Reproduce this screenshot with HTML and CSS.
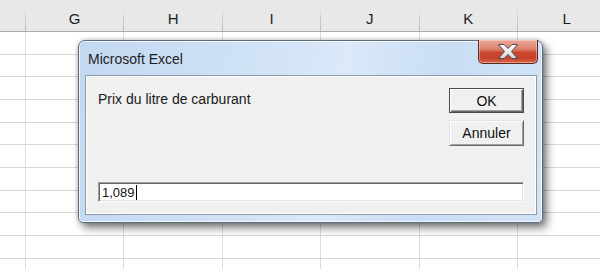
FILE: index.html
```html
<!DOCTYPE html>
<html lang="fr">
<head>
  <meta charset="UTF-8">
  <title>Microsoft Excel - InputBox</title>
  <link rel="stylesheet" href="styles.css">
</head>
<body>

  <div class="sheet">
    <div class="col-head">
      <div class="hcell"></div>
      <div class="hcell">G</div>
      <div class="hcell">H</div>
      <div class="hcell">I</div>
      <div class="hcell">J</div>
      <div class="hcell">K</div>
      <div class="hcell">L</div>
    </div>
    <div class="row"><div></div><div></div><div></div><div></div><div></div><div></div><div></div></div>
    <div class="row"><div></div><div></div><div></div><div></div><div></div><div></div><div></div></div>
    <div class="row"><div></div><div></div><div></div><div></div><div></div><div></div><div></div></div>
    <div class="row"><div></div><div></div><div></div><div></div><div></div><div></div><div></div></div>
    <div class="row"><div></div><div></div><div></div><div></div><div></div><div></div><div></div></div>
    <div class="row"><div></div><div></div><div></div><div></div><div></div><div></div><div></div></div>
    <div class="row"><div></div><div></div><div></div><div></div><div></div><div></div><div></div></div>
    <div class="row"><div></div><div></div><div></div><div></div><div></div><div></div><div></div></div>
    <div class="row"><div></div><div></div><div></div><div></div><div></div><div></div><div></div></div>
    <div class="row"><div></div><div></div><div></div><div></div><div></div><div></div><div></div></div>
    <div class="row"><div></div><div></div><div></div><div></div><div></div><div></div><div></div></div>
  </div>

  <div class="dialog">
    <div class="titlebar">
      <span class="title">Microsoft Excel</span>
      <button class="close" title="Fermer">
        <svg width="22" height="17" viewBox="0 0 22 17">
          <defs>
            <linearGradient id="xfill" x1="0" y1="0" x2="0" y2="1">
              <stop offset="0" stop-color="#ffffff"/>
              <stop offset="1" stop-color="#d8d8d8"/>
            </linearGradient>
          </defs>
          <polygon points="1.5,1.5 7,1.5 11,5.5 15,1.5 20.5,1.5 14.5,8.5 20.5,15.5 15,15.5 11,11.5 7,15.5 1.5,15.5 7.5,8.5"
                   fill="url(#xfill)" stroke="#4a4a4a" stroke-width="1" stroke-linejoin="round"/>
        </svg>
      </button>
    </div>
    <div class="client">
      <div class="top">
        <p class="prompt">Prix du litre de carburant</p>
        <div class="actions">
          <button class="btn default">OK</button>
          <button class="btn">Annuler</button>
        </div>
      </div>
      <div class="field">1,089<span class="caret"></span></div>
    </div>
  </div>

</body>
</html>
```

FILE: styles.css
```css
body {
  margin: 0;
  width: 600px;
  height: 269px;
  overflow: hidden;
  background: #fff;
  font-family: "Liberation Sans", Arial, sans-serif;
  position: relative;
}

/* feuille excel en fond */
.col-head,
.row {
  display: grid;
  grid-template-columns: 26px repeat(6, 98.4px);
}

.col-head {
  height: 31px;
  background: #e8e8e8;
  border-bottom: 1px solid #ababab;
}

.hcell {
  display: flex;
  align-items: center;
  justify-content: center;
  padding-top: 6px;
  font-size: 15px;
  color: #1f1f1f;
  border-right: 1px solid transparent;
  border-image: linear-gradient(to bottom, #e8e8e8 0, #e8e8e8 8px, #c8c8c8 20px, #b8b8b8 100%) 1;
}

.row {
  height: 21.67px;
  border-bottom: 1px solid #d6d6d6;
}

.row div {
  border-right: 1px solid #dcdcdc;
}

/* boite de dialogue */
.dialog {
  position: absolute;
  left: 78px;
  top: 40px;
  width: 463px;
  height: 181px;
  border: 1px solid #5d6b7a;
  border-radius: 7px 7px 5px 5px;
  background: linear-gradient(100deg, #c3d9f1 0%, #cde0f5 30%, #dbe9f9 55%, #c9ddf4 75%, #d2e4f7 100%);
  box-shadow: 4px 5px 9px rgba(0, 0, 0, 0.5), 0 0 4px rgba(0, 0, 0, 0.25), inset 0 0 0 1px rgba(255, 255, 255, 0.7);
  display: flex;
  flex-direction: column;
}

.titlebar {
  height: 34px;
  position: relative;
  display: flex;
  align-items: center;
  padding-left: 9px;
}

.title {
  font-size: 14px;
  color: #1e1e1e;
  margin-top: 1px;
}

.close {
  position: absolute;
  right: 4px;
  top: -1px;
  width: 60px;
  height: 24px;
  padding: 0;
  border: 1px solid #5c2a22;
  border-top: none;
  border-radius: 0 0 5px 5px;
  background: linear-gradient(to bottom, #e9a899 0%, #dd806c 40%, #c8452e 55%, #c9432c 80%, #d86a4e 100%);
  box-shadow: inset 0 0 0 1px rgba(255, 220, 210, 0.45);
  display: flex;
  align-items: center;
  justify-content: center;
}

.client {
  flex: 1;
  margin: 0 5px 7px 6px;
  background: #f0f0f0;
  border: 1px solid #8c9bab;
  box-shadow: inset 0 0 0 1px #ffffff;
  padding: 12px 12px 0 12px;
  display: flex;
  flex-direction: column;
}

.top {
  display: flex;
  justify-content: space-between;
}

.prompt {
  margin: 3px 0 0 0;
  font-size: 14px;
  color: #1a1a1a;
}

.actions {
  display: flex;
  flex-direction: column;
  gap: 7px;
}

.btn {
  width: 75px;
  height: 26px;
  padding: 0;
  font-family: "Liberation Sans", Arial, sans-serif;
  font-size: 14px;
  color: #111;
  background: #f0f0f0;
  border: 1px solid;
  border-color: #e3e3e3 #696969 #696969 #e3e3e3;
  box-shadow: inset 1px 1px 0 #ffffff, inset -1px -1px 0 #a0a0a0;
}

.default {
  height: 25px;
  border: 1px solid #4a4a4a;
  box-shadow: inset 1px 1px 0 #ffffff, inset -1px -1px 0 #696969, inset -2px -2px 0 #a0a0a0;
}

.field {
  margin-top: 36px;
  height: 20px;
  width: 426px;
  box-sizing: border-box;
  background: #fff;
  border: 1px solid;
  border-color: #a0a0a0 #ffffff #ffffff #a0a0a0;
  box-shadow: inset 1px 1px 0 #696969, inset -1px -1px 0 #e3e3e3;
  padding: 2px 0 0 3px;
  font-size: 13px;
  color: #111;
  display: flex;
  align-items: flex-start;
}

.caret {
  display: inline-block;
  width: 0;
  height: 15px;
  border-left: 1px solid #000;
  margin-left: 1px;
}
```
